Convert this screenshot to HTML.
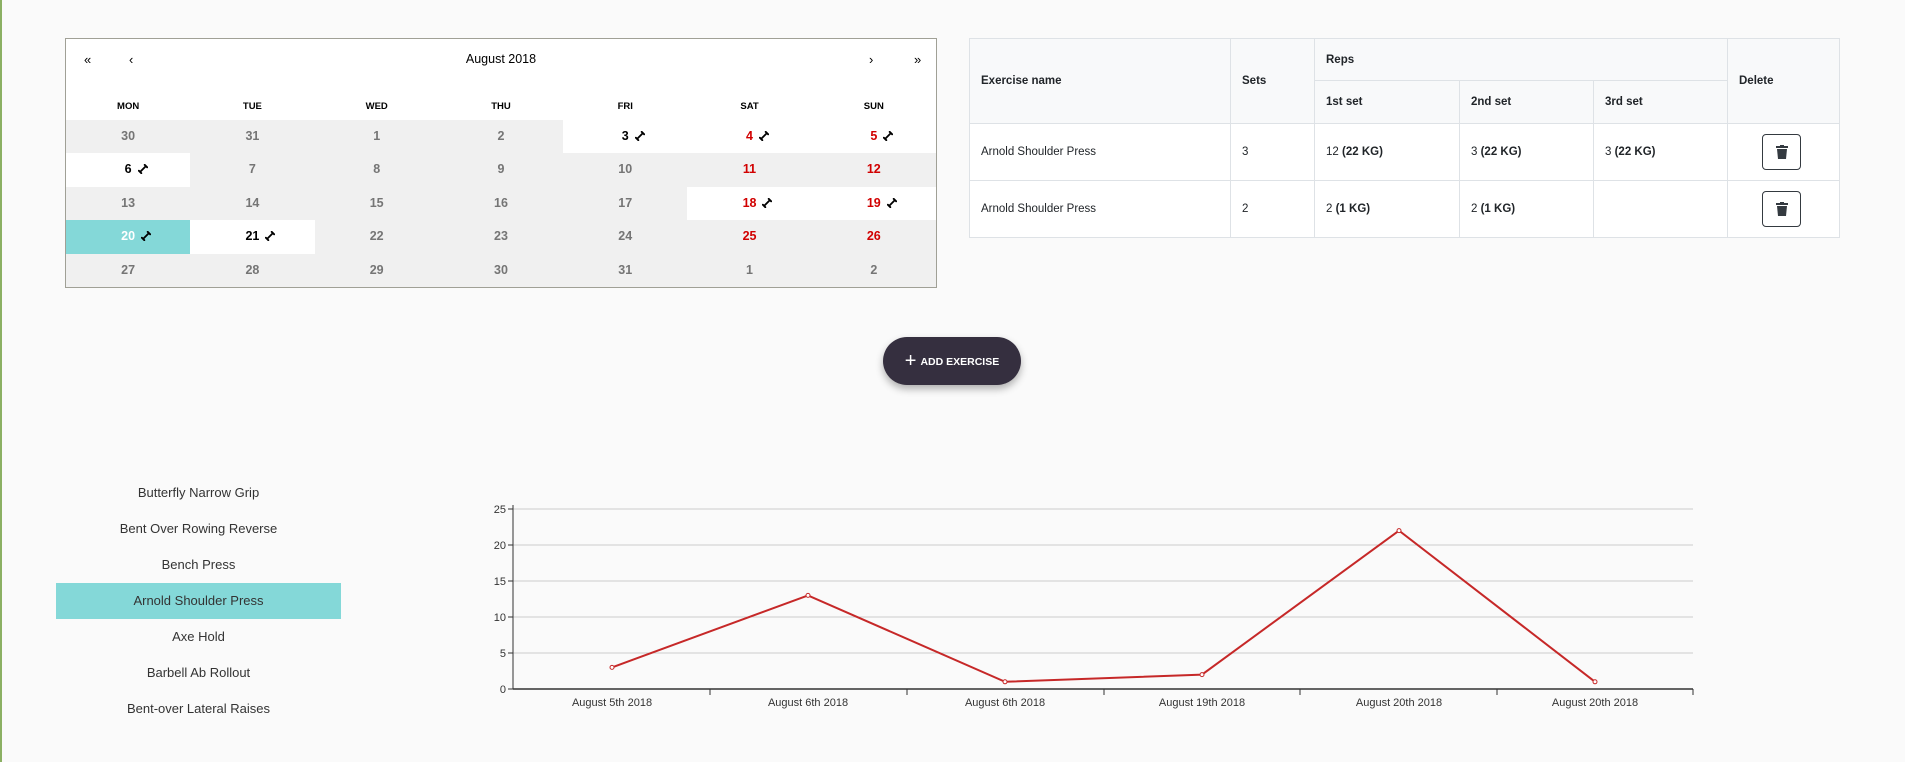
<!DOCTYPE html>
<html><head><meta charset="utf-8"><style>
*{box-sizing:border-box;margin:0;padding:0}
body{width:1905px;height:762px;background:#fafafa;font-family:"Liberation Sans",sans-serif;position:relative;overflow:hidden}
.gl{position:absolute;left:0;top:0;width:2px;height:762px;background:#8bb063}
.cal{position:absolute;left:65px;top:38px;width:872px;height:250px;border:1px solid #a0a096;background:#fff;overflow:hidden}
.nav{position:absolute;top:13px;font-size:13px;color:#000}
.wd{position:absolute;top:62px;width:124.28px;text-align:center;font-size:9.5px;font-weight:bold;color:#000}
.d{position:absolute;width:124.28px;height:33.4px;line-height:33.4px;text-align:center;font-size:12.5px;font-weight:bold;color:#757575;background:#f0f0f0}
.d.a{background:#fff;color:#000}
.d.r{color:#d10000}
.d.s{background:#84d8d8;color:#fff}
.d i{position:absolute;margin-left:6px;font-style:normal}
table{position:absolute;left:969px;top:38px;width:871px;border-collapse:collapse;font-size:11.5px;color:#212529;font-family:"Liberation Sans",sans-serif}
td,th{border:1px solid #dee2e6;text-align:left;padding:0 11px}
th{background:#f8f9fa;font-weight:bold}
td{background:#fff}
.btn{display:inline-block;width:39px;height:36px;border:1px solid #343a40;border-radius:4px;position:relative;vertical-align:middle}
.add{position:absolute;left:883px;top:337px;width:138px;height:48px;border-radius:24px;background:#352f3f;color:#fff;font-size:10.5px;font-weight:bold;line-height:48px;text-align:center;box-shadow:0 4px 8px rgba(0,0,0,.3)}
.li{position:absolute;left:56px;width:285px;height:36px;line-height:36px;text-align:center;font-size:13px;color:#333}
</style></head><body>
<div class="gl"></div>
<div class="cal">
<span class="nav" style="left:18px">«</span><span class="nav" style="left:63px">‹</span>
<span class="nav" style="left:0;width:870px;text-align:center;font-size:12.5px">August 2018</span>
<span class="nav" style="left:803px">›</span><span class="nav" style="left:848px">»</span>
<div class="wd" style="left:0">MON</div><div class="wd" style="left:124.28px">TUE</div><div class="wd" style="left:248.57px">WED</div><div class="wd" style="left:372.86px">THU</div><div class="wd" style="left:497.14px">FRI</div><div class="wd" style="left:621.43px">SAT</div><div class="wd" style="left:745.71px">SUN</div>
<div id="g"></div>
</div>
<script>
var days=[30,31,1,2,3,4,5,6,7,8,9,10,11,12,13,14,15,16,17,18,19,20,21,22,23,24,25,26,27,28,29,30,31,1,2];
var act={4:1,5:1,6:1,7:1,19:1,20:1,21:1,22:1};var h='';
days.forEach(function(n,i){var c=i%7,r=Math.floor(i/7);var cls='d';
if(act[i])cls+=' a';if(i==21)cls=cls.replace(' a','')+' s';
if((c==5||c==6)&&i>=5&&i<33)cls+=' r';
var ic=(act[i])?'<i><svg width="10" height="10" viewBox="0 0 12 12" style="vertical-align:-1px"><g stroke="#000" stroke-width="2.2" stroke-linecap="round"><line x1="3" y1="9" x2="9" y2="3"/><line x1="1" y1="8" x2="4" y2="11"/><line x1="8" y1="1" x2="11" y2="4"/></g></svg></i>':'';
h+='<div class="'+cls+'" style="left:'+(c*124.28)+'px;top:'+(81+r*33.4)+'px">'+n+ic+'</div>';});
document.getElementById('g').innerHTML=h;
</script>
<table>
<tr style="height:42px"><th rowspan="2" style="width:261px">Exercise name</th><th rowspan="2" style="width:84px">Sets</th><th colspan="3">Reps</th><th rowspan="2">Delete</th></tr>
<tr style="height:43px"><th style="width:145px">1st set</th><th style="width:134px">2nd set</th><th style="width:134px">3rd set</th></tr>
<tr style="height:57px"><td>Arnold Shoulder Press</td><td>3</td><td>12 <b>(22 KG)</b></td><td>3 <b>(22 KG)</b></td><td>3 <b>(22 KG)</b></td><td style="padding-left:34px"><span class="btn"><svg width="12" height="14" viewBox="0 0 12 14" style="position:absolute;left:13px;top:10px"><rect x="0" y="1" width="12" height="2" fill="#343a40"/><rect x="4" y="0" width="4" height="2" fill="#343a40"/><path d="M1 4h10l-1 10H2z" fill="#343a40"/></svg></span></td></tr>
<tr style="height:57px"><td>Arnold Shoulder Press</td><td>2</td><td>2 <b>(1 KG)</b></td><td>2 <b>(1 KG)</b></td><td></td><td style="padding-left:34px"><span class="btn"><svg width="12" height="14" viewBox="0 0 12 14" style="position:absolute;left:13px;top:10px"><rect x="0" y="1" width="12" height="2" fill="#343a40"/><rect x="4" y="0" width="4" height="2" fill="#343a40"/><path d="M1 4h10l-1 10H2z" fill="#343a40"/></svg></span></td></tr>
</table>
<div class="add"><span style="font-size:20px;font-weight:normal;vertical-align:-2px;margin-right:4px">+</span>ADD EXERCISE</div>
<div class="li" style="top:475px">Butterfly Narrow Grip</div>
<div class="li" style="top:511px">Bent Over Rowing Reverse</div>
<div class="li" style="top:547px">Bench Press</div>
<div class="li" style="top:583px;background:#84d8d8">Arnold Shoulder Press</div>
<div class="li" style="top:619px">Axe Hold</div>
<div class="li" style="top:655px">Barbell Ab Rollout</div>
<div class="li" style="top:691px">Bent-over Lateral Raises</div>
<svg width="1905" height="762" style="position:absolute;left:0;top:0" font-family="Liberation Sans" font-size="11" fill="#333">
<g stroke="#ccc"><line x1="513" x2="1693" y1="509" y2="509"/><line x1="513" x2="1693" y1="545" y2="545"/><line x1="513" x2="1693" y1="581" y2="581"/><line x1="513" x2="1693" y1="617" y2="617"/><line x1="513" x2="1693" y1="653" y2="653"/></g>
<line x1="513" x2="513" y1="505" y2="689" stroke="#333"/>
<line x1="513" x2="1693" y1="689" y2="689" stroke="#333" stroke-width="1.5"/>
<g stroke="#333"><line x1="710" x2="710" y1="689" y2="695"/><line x1="907" x2="907" y1="689" y2="695"/><line x1="1104" x2="1104" y1="689" y2="695"/><line x1="1300" x2="1300" y1="689" y2="695"/><line x1="1497" x2="1497" y1="689" y2="695"/><line x1="1693" x2="1693" y1="689" y2="695"/><line x1="508" x2="513" y1="509" y2="509"/><line x1="508" x2="513" y1="545" y2="545"/><line x1="508" x2="513" y1="581" y2="581"/><line x1="508" x2="513" y1="617" y2="617"/><line x1="508" x2="513" y1="653" y2="653"/><line x1="508" x2="513" y1="689" y2="689"/></g>
<g text-anchor="end"><text x="506" y="513">25</text><text x="506" y="549">20</text><text x="506" y="585">15</text><text x="506" y="621">10</text><text x="506" y="657">5</text><text x="506" y="693">0</text></g>
<g text-anchor="middle"><text x="612" y="706">August 5th 2018</text><text x="808" y="706">August 6th 2018</text><text x="1005" y="706">August 6th 2018</text><text x="1202" y="706">August 19th 2018</text><text x="1399" y="706">August 20th 2018</text><text x="1595" y="706">August 20th 2018</text></g>
<polyline points="612,667.4 808,595.4 1005,681.8 1202,674.6 1399,530.6 1595,681.8" fill="none" stroke="#c62828" stroke-width="2"/>
<g fill="#fff" stroke="#c62828"><circle cx="612" cy="667.4" r="2"/><circle cx="808" cy="595.4" r="2"/><circle cx="1005" cy="681.8" r="2"/><circle cx="1202" cy="674.6" r="2"/><circle cx="1399" cy="530.6" r="2"/><circle cx="1595" cy="681.8" r="2"/></g>
</svg>
</body></html>
